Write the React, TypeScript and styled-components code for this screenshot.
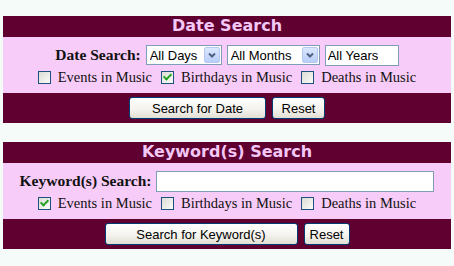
import styled, { createGlobalStyle } from 'styled-components'

const Global = createGlobalStyle`
  html, body {
    margin: 0;
    background: #f5fbf8;
  }
`

const Page = styled.main`
  display: flex;
  flex-direction: column;
  gap: 19px;
  padding: 16px 3px;
`

const Panel = styled.form`
  display: flex;
  flex-direction: column;
`

const Title = styled.h2`
  margin: 0;
  height: 21px;
  line-height: 21px;
  background: #600030;
  color: #f3c8f6;
  text-align: center;
  font: bold 16px "DejaVu Sans", Verdana, sans-serif;
`

const Body = styled.div`
  display: flex;
  flex-direction: column;
  align-items: center;
  height: 56px;
  box-sizing: border-box;
  padding-top: 7px;
  background: #f8ccf8;
  font-family: "Liberation Serif", "Times New Roman", serif;
  color: #111;
`

const Row = styled.div`
  display: flex;
  align-items: center;
  gap: 5px;
  height: 22px;
`

const FieldLabel = styled.label`
  font-weight: bold;
  font-size: 15.5px;
`

const SelectBox = styled.span<{ $w: number }>`
  display: inline-flex;
  align-items: center;
  width: ${p => p.$w}px;
  height: 20px;
  box-sizing: border-box;
  border: 1px solid #7f9db9;
  background: #fff;
  padding: 1px;
`

const SelectField = styled.select`
  appearance: none;
  flex: 1;
  min-width: 0;
  height: 100%;
  border: 0;
  padding: 0 0 0 2px;
  background: transparent;
  color: #000;
  font: 13px "Liberation Sans", Arial, sans-serif;
  outline: none;
`

const DropArrow = styled.span`
  display: flex;
  align-items: center;
  justify-content: center;
  width: 16px;
  height: 16px;
  box-sizing: border-box;
  border: 1px solid #b4c8f2;
  border-radius: 2px;
  background: linear-gradient(#dce7fd, #b9cef9);
`

const TextField = styled.input<{ $w: number }>`
  width: ${p => p.$w}px;
  height: 21px;
  box-sizing: border-box;
  border: 1px solid #7f9db9;
  padding: 0 2px;
  background: #fff;
  color: #000;
  font: 13px "Liberation Sans", Arial, sans-serif;
  outline: none;
`

const Checks = styled.div`
  display: flex;
  align-items: center;
  gap: 9px;
  height: 22px;
  font-size: 14.5px;
`

const CheckItem = styled.label`
  display: flex;
  align-items: center;
  gap: 7px;
`

const Box = styled.input`
  appearance: none;
  margin: 0;
  width: 13px;
  height: 13px;
  box-sizing: border-box;
  border: 1px solid #1c5180;
  background: linear-gradient(135deg, #dcdcd5, #fbfbf8);
  display: grid;
  place-items: center;

  &:checked::after {
    content: '';
    width: 3px;
    height: 6px;
    margin-top: -2px;
    border: solid #21a121;
    border-width: 0 2px 2px 0;
    transform: rotate(45deg);
  }
`

const Footer = styled.div`
  display: flex;
  justify-content: center;
  gap: 6px;
  height: 30px;
  box-sizing: border-box;
  padding-top: 4px;
  background: #600030;
`

const Button = styled.button<{ $w: number }>`
  width: ${p => p.$w}px;
  height: 22px;
  padding: 0;
  border: 1px solid #003c74;
  border-radius: 3px;
  background: linear-gradient(#ffffff, #f4f3ee 55%, #e2ded3);
  color: #000;
  font: 13px "Liberation Sans", Arial, sans-serif;
`

function Chevron() {
  return (
    <svg width="8" height="6" viewBox="0 0 8 6">
      <path d="M1 1.5 L4 4.5 L7 1.5" fill="none" stroke="#4d6185" strokeWidth="2" />
    </svg>
  )
}

function Select({ w, options }: { w: number; options: string[] }) {
  return (
    <SelectBox $w={w}>
      <SelectField defaultValue={options[0]}>
        {options.map(o => <option key={o}>{o}</option>)}
      </SelectField>
      <DropArrow><Chevron /></DropArrow>
    </SelectBox>
  )
}

function CheckRow({ checked }: { checked: string }) {
  const items = ['Events in Music', 'Birthdays in Music', 'Deaths in Music']
  return (
    <Checks>
      {items.map(t => (
        <CheckItem key={t}>
          <Box type="checkbox" defaultChecked={t === checked} />
          {t}
        </CheckItem>
      ))}
    </Checks>
  )
}

export default function App() {
  return (
    <Page>
      <Global />
      <Panel>
        <Title>Date Search</Title>
        <Body>
          <Row>
            <FieldLabel>Date Search:</FieldLabel>
            <Select w={76} options={['All Days']} />
            <Select w={93} options={['All Months']} />
            <TextField $w={74} defaultValue="All Years" />
          </Row>
          <CheckRow checked="Birthdays in Music" />
        </Body>
        <Footer>
          <Button type="button" $w={137}>Search for Date</Button>
          <Button type="reset" $w={53}>Reset</Button>
        </Footer>
      </Panel>
      <Panel>
        <Title>Keyword(s) Search</Title>
        <Body>
          <Row>
            <FieldLabel>Keyword(s) Search:</FieldLabel>
            <TextField $w={278} />
          </Row>
          <CheckRow checked="Events in Music" />
        </Body>
        <Footer>
          <Button type="button" $w={193}>Search for Keyword(s)</Button>
          <Button type="reset" $w={46}>Reset</Button>
        </Footer>
      </Panel>
    </Page>
  )
}
